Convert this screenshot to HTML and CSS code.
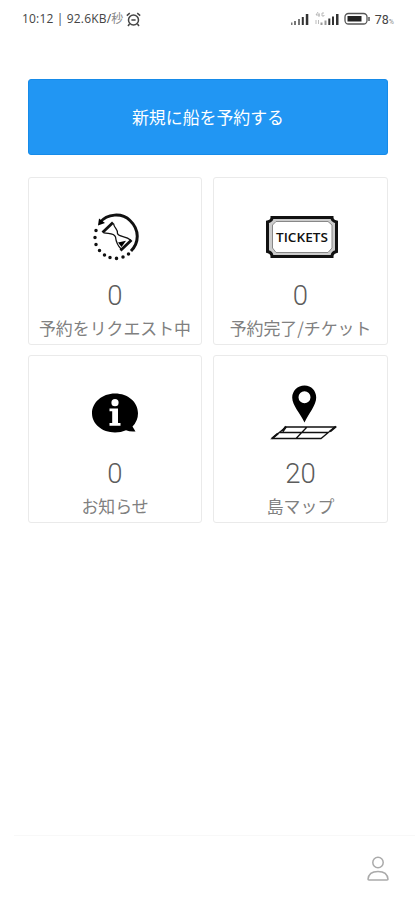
FILE: index.html
```
<!DOCTYPE html>
<html lang="ja">
<head>
<meta charset="utf-8">
<title>船の予約</title>
<link rel="stylesheet" href="styles.css">
</head>
<body>
<header class="status">
  <div class="status-left">
    <span class="clock">10:12 | 92.6KB/<span class="unit">秒</span></span>
    <svg class="alarm" width="15" height="15" viewBox="0 0 15 15" fill="none" stroke="#444" stroke-width="1.5"><circle cx="7.5" cy="8" r="5"/><path d="M.8 3.6 3.8 1.2M14.2 3.6l-3-2.4M3.5 12 2 14M11.5 12l1.5 2M5.4 8h4.2"/></svg>
  </div>
  <div class="status-right">
    <svg width="80" height="16" viewBox="291 11 80 16">
      <g fill="#333"><path fill="#777" d="M290.500 22.500h2v2.500h-2zM294 21h2v4h-2zM298 19h2v6h-2z"/><path d="M301.800 17h2v8h-2zM305.800 14h2.500v11h-2.500z"/></g>
      <g fill="#333"><path fill="#999" d="M320.500 22.500h2v2.500h-2zM324.500 20.500h2v4.500h-2z"/><path d="M328.300 18.500h2v6.500h-2zM332 16.500h2v8.500h-2zM336 14h2.500v11h-2.500z"/></g>
      <path d="M318 12l-2 3h4M319 13v4M324 13h-2v3h2v-1M316 20v4M318.500 20v4" fill="none" stroke="#aaa" stroke-width=".8"/>
      <rect x="345" y="13.500" width="22" height="10.500" rx="3.500" fill="#fff" stroke="#555" stroke-width="1.300"/>
      <rect x="347.500" y="16" width="14" height="5.500" fill="#222"/>
      <path d="M369 17v4" stroke="#555" stroke-width="1.500"/>
    </svg>
    <span class="battery">78<small>%</small></span>
  </div>
</header>
<main>
  <button class="reserve">新規に船を予約する</button>
  <section class="grid">
    <article class="card">
      <svg width="70" height="65" viewBox="0 0 70 65">
        <path d="M20 17.500C27 8.500 42 7.500 50 15.500C60 25 59 38 51 46" fill="none" stroke="#111" stroke-width="3"/>
        <path d="M19 13.500 18 20.500 25 18z"/>
        <path d="M16 25.500v.1M15 32.500v.1M16 39.500v.1M19.500 45.500v.1M24.500 50v.1M30 52.500v.1M36.500 53.300v.1M43 52v.1M48.500 49v.1" stroke="#111" stroke-width="3.500" stroke-linecap="round"/>
        <path d="M22.500 27.500 33 17.500M40.500 45.500 51.500 35" stroke="#111" stroke-width="2.800"/>
        <path d="M24 27.800C29 29 34 28 35.500 32C36 37 38 41 41.500 44.500M33.500 18.500C34 23 38.500 24.500 37.500 28.500C38.500 32 46 31 50.500 35" fill="none" stroke="#111" stroke-width="1.300"/>
        <path d="M38 37.500 46 35.800 41.500 42z"/>
      </svg>
      <strong>0</strong>
      <p>予約をリクエスト中</p>
    </article>
    <article class="card">
      <svg width="95" height="65" viewBox="-2 0 95 65">
        <path d="M17 12.500H77Q77 16 81.500 17V46.500Q77 47.500 77 51.500H17Q17 47.500 12.500 46.500V17Q17 16 17 12.500z" fill="#ccc" stroke="#111" stroke-width="3"/>
        <path d="M21 16.500H73L77 20V43L73 47.500H21L17.500 43V20z" fill="#fff" stroke="#888" stroke-width="1"/>
        <text class="ticket-text" x="47" y="36.700" text-anchor="middle" textLength="52" lengthAdjust="spacingAndGlyphs">TICKETS</text>
      </svg>
      <strong>0</strong>
      <p>予約完了/チケット</p>
    </article>
    <article class="card">
      <svg width="70" height="65" viewBox="0 3 70 65">
        <path d="M35 13.500C48 13.500 58 22 58 33.300Q58 41 52.500 46.500L55.500 51.500Q50 52 46 50.300Q41 52.500 35 52.500C22 52.500 12 44 12 33.300S22 13.500 35 13.500z"/>
        <circle cx="35" cy="22.700" r="3.600" fill="#fff"/>
        <path d="M29.500 28.500H38V43h2.500v2.800H29.500V43h2.700V31.300h-2.700z" fill="#fff"/>
      </svg>
      <strong>0</strong>
      <p>お知らせ</p>
    </article>
    <article class="card">
      <svg width="85" height="65" viewBox="-2 5 85 65">
        <path fill-rule="evenodd" d="M44.500 7.500C51.500 7.500 56.200 13 56.200 19.500C56.200 27 48.500 36 44.500 44.500C40.500 36 32.200 27 32.200 19.500C32.200 13 37.500 7.500 44.500 7.500zM44.500 13.200a6 6 0 1 0 0 12a6 6 0 1 0 0-12z"/>
        <path d="M26 49H75L61 60.500H12zM19.500 54.500H68M47 49 36 60.500" fill="none" stroke="#111" stroke-width="1.300"/>
        <path d="M26 48.500 22.500 53.500M76 48.500 70 53.500M18 55.500 12 60.500" stroke="#111" stroke-width="2.200"/>
      </svg>
      <strong>20</strong>
      <p>島マップ</p>
    </article>
  </section>
</main>
<nav>
  <svg width="24" height="28" viewBox="0 0 24 28" fill="none" stroke="#aaa" stroke-width="1.500"><circle cx="12" cy="7.500" r="5.200"/><path d="M2 24.300C2.500 18.500 6.500 16.500 12 16.500S21.500 18.500 22 24.300Q22 25 21 25H3Q2 25 2 24.300z"/></svg>
</nav>
</body>
</html>
```
FILE: styles.css
```
* { box-sizing: border-box; }
body {
  margin: 0;
  height: 900px;
  display: flex;
  flex-direction: column;
  background: #fff;
  color: #5c5c5c;
  font-family: Roboto, "Noto Sans CJK JP", sans-serif;
}
.status {
  height: 38px;
  padding: 0 21px 0 22px;
  display: flex;
  justify-content: space-between;
  align-items: center;
  color: #444;
  font-size: 12px;
}
.status-left, .status-right { display: flex; align-items: center; }
.clock {
  font-family: "Open Sans", "Noto Sans CJK JP", sans-serif;
  font-size: 12px;
  letter-spacing: 0.17px;
  line-height: 18px;
  white-space: nowrap;
}
.unit { color: #888; }
.alarm { margin-left: 3px; }
.battery { margin-left: 4px; font-size: 12.5px; white-space: nowrap; }
.battery small { font-size: 7px; color: #888; }
main { flex: 1; padding: 41px 27px 0 28px; }
.reserve {
  display: block;
  width: 100%;
  height: 76px;
  padding: 0;
  border: 1px solid #168be9;
  border-radius: 3px;
  background: #2196f3;
  color: #fff;
  font: 400 16.9px/24px "Noto Sans CJK JP", sans-serif;
}
.grid {
  margin-top: 22px;
  display: grid;
  grid-template-columns: 174px 175px;
  grid-auto-rows: 168px;
  gap: 10px 11px;
}
.card {
  border: 1px solid #eaeaea;
  border-radius: 3px;
  display: flex;
  flex-direction: column;
  align-items: center;
  padding-top: 27px;
}
.card svg { display: block; flex: none; }
.card strong { font-weight: 300; font-size: 27.5px; line-height: 32px; margin-top: 10px; }
.card p {
  margin: 3px 0 0;
  color: #808080;
  font: 400 16.9px/26px "Noto Sans CJK JP", sans-serif;
  white-space: nowrap;
}
.ticket-text { font: 600 13px "Open Sans", sans-serif; fill: #111; }
nav {
  height: 65px;
  border-top: 1px solid #f8f8f8;
  margin-left: 14px;
  padding: 19px 25px 0 0;
  display: flex;
  justify-content: flex-end;
}
```
